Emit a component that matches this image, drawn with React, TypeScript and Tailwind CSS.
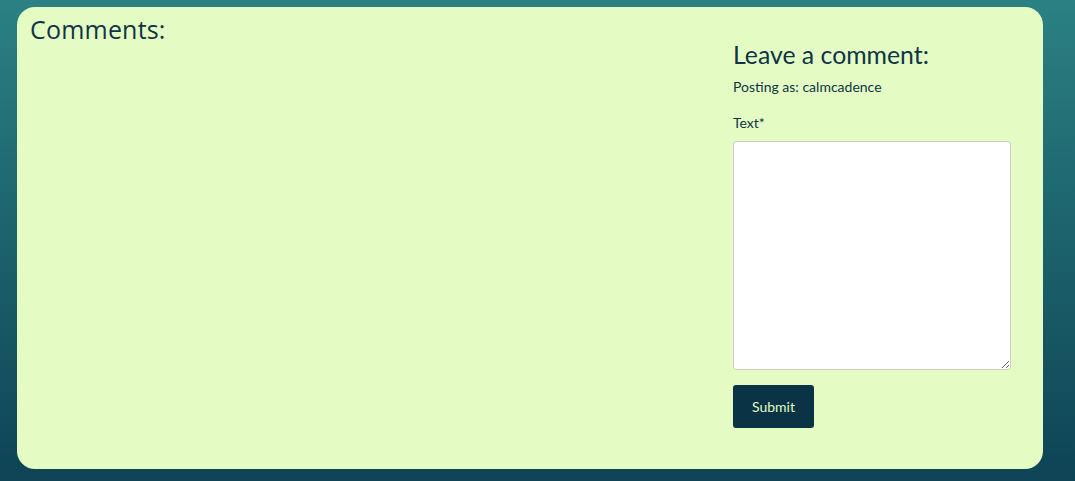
export default function App() {
  return (
    <div className="min-h-[481px] w-full bg-gradient-to-b from-[#2b8183] to-[#0e4455] pt-[7px] pb-[12px] pl-[17px] pr-[32px] font-['Lato',sans-serif] text-[#0f3446]">
      <div className="flex h-[462px] rounded-[18px] bg-[#e4fcc4] pl-[13px] pr-[32px]">
        <div className="flex-1">
          <h2 className="mt-[7px] font-['Open_Sans',sans-serif] text-[25px] leading-[30px] tracking-[0.2px]">Comments:</h2>
        </div>
        <div className="w-[278px] pt-[33px]">
          <h3 className="text-[24.8px] leading-[30px]">Leave a comment:</h3>
          <p className="mt-[8px] text-[14px] leading-[18px]">Posting as: calmcadence</p>
          <label className="mt-[18px] block text-[14px] leading-[18px]">Text*</label>
          <textarea className="mt-[9px] block h-[229px] w-[278px] rounded-[3px] border border-[#cccccc] bg-white" />
          <button className="mt-[15px] h-[43px] w-[81px] rounded-[3px] bg-[#0a3346] text-[14px] text-[#e4fcc4]">Submit</button>
        </div>
      </div>
    </div>
  )
}
